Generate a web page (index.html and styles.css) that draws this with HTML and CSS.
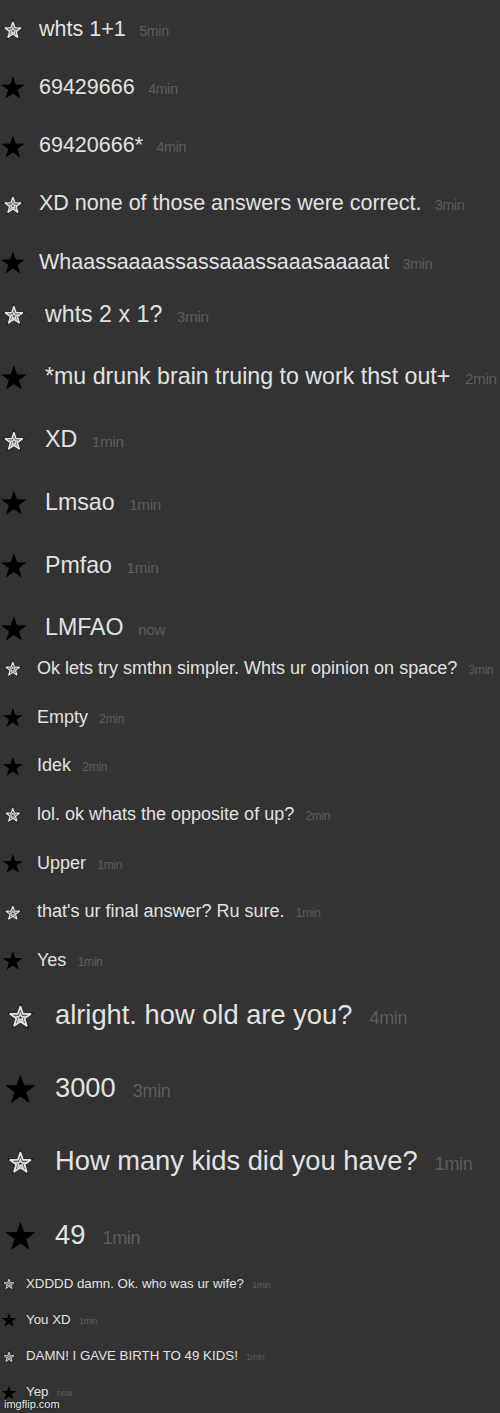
FILE: index.html
```html
<!DOCTYPE html>
<html lang="en">
<head>
    <meta charset="UTF-8">
    <meta name="viewport" content="width=device-width, initial-scale=1.0">
    <title>chat log</title>
    <link rel="stylesheet" href="styles.css">
</head>
<body>
    <svg class="defs" aria-hidden="true">
        <symbol id="star-full" viewBox="0 0 24 24">
            <polygon points="12,1.1 14.7,8.88 22.94,9.05 16.37,14.02 18.76,21.9 12,17.2 5.24,21.9 7.63,14.02 1.06,9.05 9.3,8.88" fill="#000"/>
        </symbol>
        <symbol id="star-open" viewBox="0 0 24 24">
            <g transform="translate(12 12.6) scale(0.9) translate(-12 -12.6)">
                <polygon points="12,1.1 14.7,8.88 22.94,9.05 16.37,14.02 18.76,21.9 12,17.2 5.24,21.9 7.63,14.02 1.06,9.05 9.3,8.88" fill="#000"/>
            </g>
            <g transform="translate(12 12.6) scale(0.68) translate(-12 -12.6)">
                <polygon points="12,1.1 14.7,8.88 22.94,9.05 16.37,14.02 18.76,21.9 12,17.2 5.24,21.9 7.63,14.02 1.06,9.05 9.3,8.88" fill="#3a3a3a" stroke="#e4e4e4" stroke-width="2" stroke-linejoin="round"/>
            </g>
            <g transform="translate(12 13) scale(0.27) translate(-12 -12.6)">
                <polygon points="12,1.1 14.7,8.88 22.94,9.05 16.37,14.02 18.76,21.9 12,17.2 5.24,21.9 7.63,14.02 1.06,9.05 9.3,8.88" fill="none" stroke="#d8d8d8" stroke-width="4"/>
            </g>
        </symbol>
    </svg>

    <main class="log">
        <section class="chunk chunk-1">
            <div class="msg"><span class="icon"><svg class="star"><use href="#star-open"/></svg></span><p class="text">whts 1+1<span class="time">5min</span></p></div>
            <div class="msg"><span class="icon"><svg class="star"><use href="#star-full"/></svg></span><p class="text">69429666<span class="time">4min</span></p></div>
            <div class="msg"><span class="icon"><svg class="star"><use href="#star-full"/></svg></span><p class="text">69420666*<span class="time">4min</span></p></div>
            <div class="msg"><span class="icon"><svg class="star"><use href="#star-open"/></svg></span><p class="text">XD none of those answers were correct.<span class="time">3min</span></p></div>
            <div class="msg"><span class="icon"><svg class="star"><use href="#star-full"/></svg></span><p class="text">Whaassaaaassassaaassaaasaaaaat<span class="time">3min</span></p></div>
        </section>

        <section class="chunk chunk-2">
            <div class="msg"><span class="icon"><svg class="star"><use href="#star-open"/></svg></span><p class="text">whts 2 x 1?<span class="time">3min</span></p></div>
            <div class="msg"><span class="icon"><svg class="star"><use href="#star-full"/></svg></span><p class="text">*mu drunk brain truing to work thst out+<span class="time">2min</span></p></div>
            <div class="msg"><span class="icon"><svg class="star"><use href="#star-open"/></svg></span><p class="text">XD<span class="time">1min</span></p></div>
            <div class="msg"><span class="icon"><svg class="star"><use href="#star-full"/></svg></span><p class="text">Lmsao<span class="time">1min</span></p></div>
            <div class="msg"><span class="icon"><svg class="star"><use href="#star-full"/></svg></span><p class="text">Pmfao<span class="time">1min</span></p></div>
            <div class="msg"><span class="icon"><svg class="star"><use href="#star-full"/></svg></span><p class="text">LMFAO<span class="time">now</span></p></div>
        </section>

        <section class="chunk chunk-3">
            <div class="msg"><span class="icon"><svg class="star"><use href="#star-open"/></svg></span><p class="text">Ok lets try smthn simpler. Whts ur opinion on space?<span class="time">3min</span></p></div>
            <div class="msg"><span class="icon"><svg class="star"><use href="#star-full"/></svg></span><p class="text">Empty<span class="time">2min</span></p></div>
            <div class="msg"><span class="icon"><svg class="star"><use href="#star-full"/></svg></span><p class="text">Idek<span class="time">2min</span></p></div>
            <div class="msg"><span class="icon"><svg class="star"><use href="#star-open"/></svg></span><p class="text">lol. ok whats the opposite of up?<span class="time">2min</span></p></div>
            <div class="msg"><span class="icon"><svg class="star"><use href="#star-full"/></svg></span><p class="text">Upper<span class="time">1min</span></p></div>
            <div class="msg"><span class="icon"><svg class="star"><use href="#star-open"/></svg></span><p class="text">that's ur final answer? Ru sure.<span class="time">1min</span></p></div>
            <div class="msg"><span class="icon"><svg class="star"><use href="#star-full"/></svg></span><p class="text">Yes<span class="time">1min</span></p></div>
        </section>

        <section class="chunk chunk-4">
            <div class="msg"><span class="icon"><svg class="star"><use href="#star-open"/></svg></span><p class="text">alright. how old are you?<span class="time">4min</span></p></div>
            <div class="msg"><span class="icon"><svg class="star"><use href="#star-full"/></svg></span><p class="text">3000<span class="time">3min</span></p></div>
            <div class="msg"><span class="icon"><svg class="star"><use href="#star-open"/></svg></span><p class="text">How many kids did you have?<span class="time">1min</span></p></div>
            <div class="msg"><span class="icon"><svg class="star"><use href="#star-full"/></svg></span><p class="text">49<span class="time">1min</span></p></div>
        </section>

        <section class="chunk chunk-5">
            <div class="msg"><span class="icon"><svg class="star"><use href="#star-open"/></svg></span><p class="text">XDDDD damn. Ok. who was ur wife?<span class="time">1min</span></p></div>
            <div class="msg"><span class="icon"><svg class="star"><use href="#star-full"/></svg></span><p class="text">You XD<span class="time">1min</span></p></div>
            <div class="msg"><span class="icon"><svg class="star"><use href="#star-open"/></svg></span><p class="text">DAMN! I GAVE BIRTH TO 49 KIDS!<span class="time">1min</span></p></div>
            <div class="msg"><span class="icon"><svg class="star"><use href="#star-full"/></svg></span><p class="text">Yep<span class="time">now</span></p></div>
        </section>
    </main>

    <div class="watermark">imgflip.com</div>
</body>
</html>
```

FILE: styles.css
```css
html, body {
    margin: 0;
    height: 1413px;
    overflow: hidden;
}
body {
    position: relative;
    background-color: #333;
    font-family: "Liberation Sans", Arial, sans-serif;
    color: #e2e2e2;
}
.defs {
    position: absolute;
    width: 0;
    height: 0;
}
.log {
    display: flex;
    flex-direction: column;
}
.chunk {
    display: flex;
    flex-direction: column;
    padding-left: var(--pad);
}
.msg {
    display: flex;
    align-items: center;
    height: var(--line);
}
.icon {
    flex: none;
    width: var(--gutter);
    display: flex;
    align-items: center;
}
.star {
    width: 1.2em;
    height: 1.2em;
}
.text {
    margin: 0;
    line-height: var(--line);
    white-space: nowrap;
}
.time {
    margin-left: 0.95em;
    font-size: 0.66em;
    color: #5e5e5e;
    letter-spacing: -0.02em;
}

.chunk-1 {
    font-size: 21.5px;
    --line: 25px;
    --pad: 0px;
    --gutter: 39px;
    gap: 33.25px;
    padding-top: 17.5px;
}
.chunk-2 {
    font-size: 23.2px;
    --line: 28px;
    --pad: 0px;
    --gutter: 45px;
    gap: 34.8px;
    margin-top: 25.5px;
}
.chunk-3 {
    font-size: 18px;
    --line: 22px;
    --pad: 2px;
    --gutter: 35px;
    gap: 26.7px;
    margin-top: 15px;
}
.chunk-4 {
    font-size: 27.3px;
    --line: 32px;
    --pad: 4px;
    --gutter: 51px;
    gap: 41.3px;
    margin-top: 28px;
}
.chunk-5 {
    font-size: 13.3px;
    --line: 16px;
    --pad: 1px;
    --gutter: 25px;
    gap: 20.3px;
    margin-top: 24px;
}

.watermark {
    position: absolute;
    left: 4px;
    bottom: 2px;
    font-size: 11px;
    line-height: 13px;
    color: #eee;
    text-shadow: 0 0 2px #000;
}
```
